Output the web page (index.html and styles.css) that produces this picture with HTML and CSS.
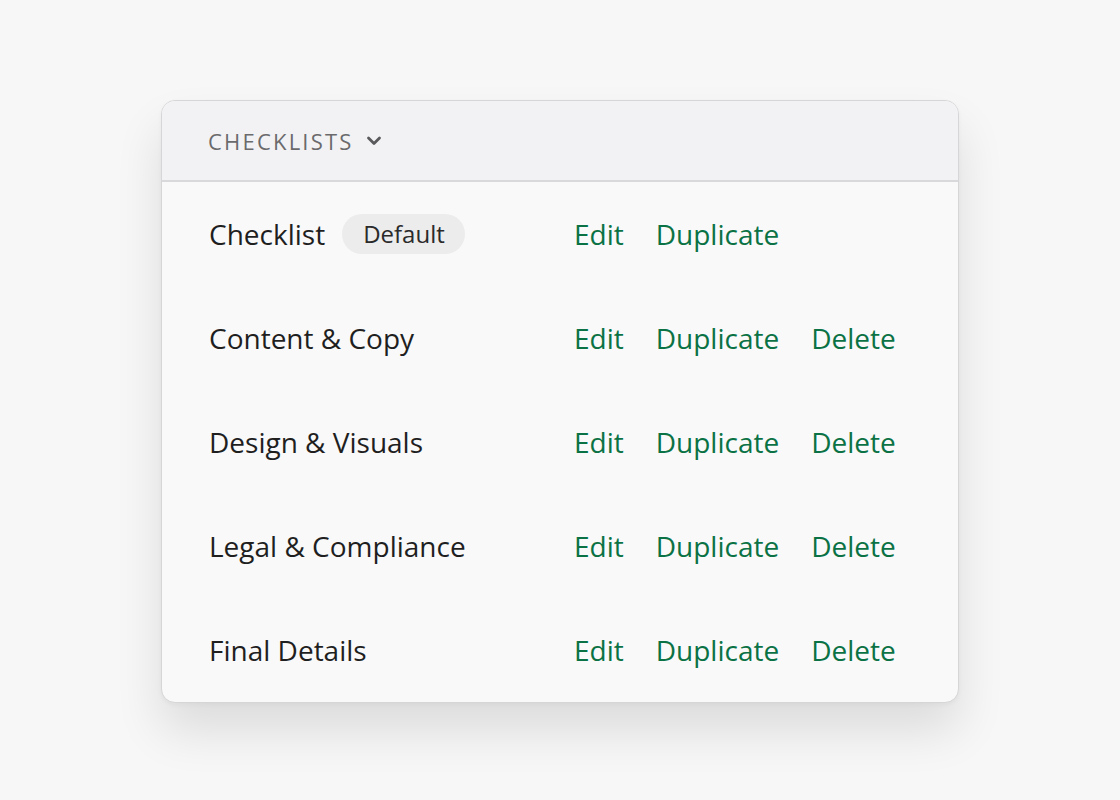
FILE: index.html
```html
<!DOCTYPE html>
<html>
<head>
<meta charset="utf-8">
<link rel="stylesheet" href="styles.css">
</head>
<body>
<div class="card">
  <div class="card-header">
    <span class="title">CHECKLISTS</span>
    <svg class="chev" width="16" height="12" viewBox="0 0 16 12"><path d="M2.5 3 L8 8.5 L13.5 3" fill="none" stroke="#5a5a5c" stroke-width="2.8" stroke-linecap="round" stroke-linejoin="round"/></svg>
  </div>
  <div class="rows">
    <div class="row">
      <div class="name">Checklist <span class="badge">Default</span></div>
      <div class="actions"><a>Edit</a><a>Duplicate</a></div>
    </div>
    <div class="row">
      <div class="name">Content &amp; Copy</div>
      <div class="actions"><a>Edit</a><a>Duplicate</a><a>Delete</a></div>
    </div>
    <div class="row">
      <div class="name">Design &amp; Visuals</div>
      <div class="actions"><a>Edit</a><a>Duplicate</a><a>Delete</a></div>
    </div>
    <div class="row">
      <div class="name">Legal &amp; Compliance</div>
      <div class="actions"><a>Edit</a><a>Duplicate</a><a>Delete</a></div>
    </div>
    <div class="row">
      <div class="name">Final Details</div>
      <div class="actions"><a>Edit</a><a>Duplicate</a><a>Delete</a></div>
    </div>
  </div>
</div>
</body>
</html>
```
FILE: styles.css
```css
html, body {
  margin: 0;
  padding: 0;
  background: #f7f7f8;
  font-family: "Open Sans", "Noto Sans", sans-serif;
}
body {
  box-sizing: border-box;
  min-height: 800px;
  padding-top: 100px;
  padding-left: 161px;
}
.card {
  width: 796px;
  background: #f9f9f9;
  border: 1px solid #d6d6d8;
  border-radius: 14px;
  box-shadow: 0 28px 48px rgba(0,0,0,0.11), 0 2px 4px rgba(0,0,0,0.04);
  overflow: hidden;
}
.card-header {
  height: 79px;
  background: #f2f2f4;
  border-bottom: 2px solid #d9d9db;
  display: flex;
  align-items: center;
  padding-left: 46px;
  gap: 12px;
}
.title {
  font-size: 22px;
  letter-spacing: 2.2px;
  color: #6a6a6c;
}
.rows {
  display: flex;
  flex-direction: column;
}
.row {
  height: 104px;
  display: grid;
  grid-template-columns: 365px 1fr;
  align-items: center;
  padding-left: 47px;
}
.name {
  font-size: 28px;
  color: #1f1f1f;
  display: flex;
  align-items: center;
  gap: 17px;
  margin-top: -1px;
}
.badge {
  background: #ececec;
  border-radius: 20px;
  height: 40px;
  padding: 0 20px 0 21px;
  font-size: 24px;
  color: #2a2a2a;
  display: inline-flex;
  align-items: center;
}
.actions {
  display: flex;
  gap: 32px;
  font-size: 28px;
  margin-top: -1px;
}
.actions a {
  color: #0b7245;
  text-decoration: none;
}
```
